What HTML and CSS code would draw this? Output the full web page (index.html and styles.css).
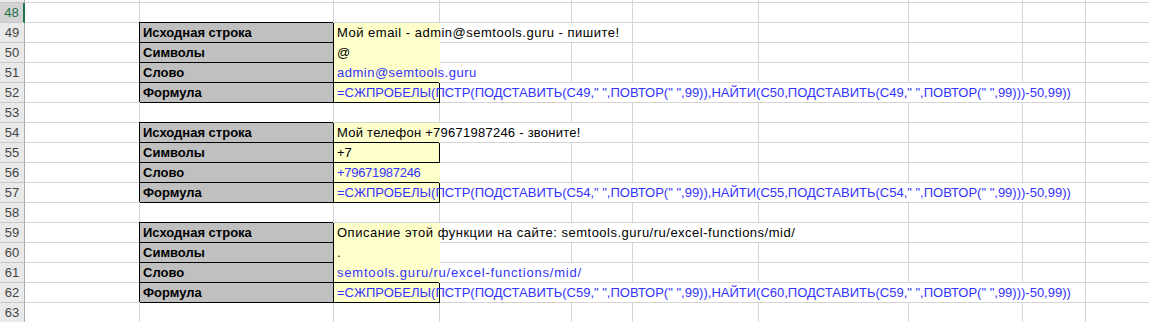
FILE: index.html
```html
<!DOCTYPE html>
<html lang="ru">
<head>
    <meta charset="UTF-8" />
    <title>ПСТР - извлечение слова по символу</title>
    <link rel="stylesheet" href="styles.css">
</head>
<body>
<div class="sheet">
    <!-- row 47 is scrolled almost out of view -->
    <div class="cut">
        <div class="row">
            <div class="rh"></div>
            <div class="cell"></div><div class="cell"></div><div class="cell"></div><div class="cell"></div><div class="cell"></div>
            <div class="cell"></div><div class="cell"></div><div class="cell"></div><div class="cell"></div><div class="cell last"></div>
        </div>
    </div>

    <div class="row">
        <div class="rh sel">48</div>
        <div class="cell"></div><div class="cell"></div><div class="cell"></div><div class="cell"></div><div class="cell"></div>
        <div class="cell"></div><div class="cell"></div><div class="cell"></div><div class="cell"></div><div class="cell last"></div>
    </div>

    <!-- example 1: email -->
    <div class="row">
        <div class="rh">49</div>
        <div class="cell"></div>
        <div class="cell lbl">Исходная строка</div>
        <div class="cell fill ls-m">Мой email - admin@semtools.guru - пишите!</div>
        <div class="cell span2"></div>
        <div class="cell"></div><div class="cell"></div><div class="cell"></div><div class="cell"></div><div class="cell last"></div>
    </div>
    <div class="row">
        <div class="rh">50</div>
        <div class="cell"></div>
        <div class="cell lbl">Символы</div>
        <div class="cell fill">@</div>
        <div class="cell"></div><div class="cell"></div><div class="cell"></div><div class="cell"></div>
        <div class="cell"></div><div class="cell"></div><div class="cell last"></div>
    </div>
    <div class="row">
        <div class="rh">51</div>
        <div class="cell"></div>
        <div class="cell lbl">Слово</div>
        <div class="cell fill blue ls-m">admin@semtools.guru</div>
        <div class="cell"></div><div class="cell"></div><div class="cell"></div><div class="cell"></div>
        <div class="cell"></div><div class="cell"></div><div class="cell last"></div>
    </div>
    <div class="row">
        <div class="rh">52</div>
        <div class="cell"></div>
        <div class="cell lbl">Формула</div>
        <div class="cell fill box blue">=СЖПРОБЕЛЫ(ПСТР(ПОДСТАВИТЬ(C49," ",ПОВТОР(" ",99)),НАЙТИ(C50,ПОДСТАВИТЬ(C49," ",ПОВТОР(" ",99)))-50,99))</div>
        <div class="cell span6"></div>
        <div class="cell last"></div>
    </div>

    <div class="row">
        <div class="rh">53</div>
        <div class="cell"></div><div class="cell"></div><div class="cell"></div><div class="cell"></div><div class="cell"></div>
        <div class="cell"></div><div class="cell"></div><div class="cell"></div><div class="cell"></div><div class="cell last"></div>
    </div>

    <!-- example 2: phone -->
    <div class="row">
        <div class="rh">54</div>
        <div class="cell"></div>
        <div class="cell lbl">Исходная строка</div>
        <div class="cell fill ls-s">Мой телефон +79671987246 - звоните!</div>
        <div class="cell span2"></div>
        <div class="cell"></div><div class="cell"></div><div class="cell"></div><div class="cell"></div><div class="cell last"></div>
    </div>
    <div class="row">
        <div class="rh">55</div>
        <div class="cell"></div>
        <div class="cell lbl">Символы</div>
        <div class="cell fill box">+7</div>
        <div class="cell"></div><div class="cell"></div><div class="cell"></div><div class="cell"></div>
        <div class="cell"></div><div class="cell"></div><div class="cell last"></div>
    </div>
    <div class="row">
        <div class="rh">56</div>
        <div class="cell"></div>
        <div class="cell lbl">Слово</div>
        <div class="cell fill blue ls-n">+79671987246</div>
        <div class="cell"></div><div class="cell"></div><div class="cell"></div><div class="cell"></div>
        <div class="cell"></div><div class="cell"></div><div class="cell last"></div>
    </div>
    <div class="row">
        <div class="rh">57</div>
        <div class="cell"></div>
        <div class="cell lbl">Формула</div>
        <div class="cell fill box blue">=СЖПРОБЕЛЫ(ПСТР(ПОДСТАВИТЬ(C54," ",ПОВТОР(" ",99)),НАЙТИ(C55,ПОДСТАВИТЬ(C54," ",ПОВТОР(" ",99)))-50,99))</div>
        <div class="cell span6"></div>
        <div class="cell last"></div>
    </div>

    <div class="row">
        <div class="rh">58</div>
        <div class="cell"></div><div class="cell"></div><div class="cell"></div><div class="cell"></div><div class="cell"></div>
        <div class="cell"></div><div class="cell"></div><div class="cell"></div><div class="cell"></div><div class="cell last"></div>
    </div>

    <!-- example 3: url -->
    <div class="row">
        <div class="rh">59</div>
        <div class="cell"></div>
        <div class="cell lbl">Исходная строка</div>
        <div class="cell fill ls-m">Описание этой функции на сайте: semtools.guru/ru/excel-functions/mid/</div>
        <div class="cell span4"></div>
        <div class="cell"></div><div class="cell"></div><div class="cell last"></div>
    </div>
    <div class="row">
        <div class="rh">60</div>
        <div class="cell"></div>
        <div class="cell lbl">Символы</div>
        <div class="cell fill">.</div>
        <div class="cell"></div><div class="cell"></div><div class="cell"></div><div class="cell"></div>
        <div class="cell"></div><div class="cell"></div><div class="cell last"></div>
    </div>
    <div class="row">
        <div class="rh">61</div>
        <div class="cell"></div>
        <div class="cell lbl">Слово</div>
        <div class="cell fill blue ls-l">semtools.guru/ru/excel-functions/mid/</div>
        <div class="cell span2"></div>
        <div class="cell"></div><div class="cell"></div><div class="cell"></div><div class="cell"></div><div class="cell last"></div>
    </div>
    <div class="row">
        <div class="rh">62</div>
        <div class="cell"></div>
        <div class="cell lbl">Формула</div>
        <div class="cell fill box blue">=СЖПРОБЕЛЫ(ПСТР(ПОДСТАВИТЬ(C59," ",ПОВТОР(" ",99)),НАЙТИ(C60,ПОДСТАВИТЬ(C59," ",ПОВТОР(" ",99)))-50,99))</div>
        <div class="cell span6"></div>
        <div class="cell last"></div>
    </div>

    <div class="row">
        <div class="rh">63</div>
        <div class="cell"></div><div class="cell"></div><div class="cell"></div><div class="cell"></div><div class="cell"></div>
        <div class="cell"></div><div class="cell"></div><div class="cell"></div><div class="cell"></div><div class="cell last"></div>
    </div>
</div>
</body>
</html>
```

FILE: styles.css
```css
:root {
    --grid: #d4d4d4;
    --head-bg: #e9e9e9;
    --head-line: #c8c8c8;
    --head-edge: #ababab;
    --head-text: #444;
    --selected: #217346;
    --label-bg: #c0c0c0;
    --fill: #ffffcc;
    --blue: #3333ff;
}

* {
    box-sizing: border-box;
}

body {
    margin: 0;
    background: #fff;
    color: #000;
    font-family: 'Liberation Sans', Arial, sans-serif;
    font-size: 13px;
    overflow: hidden;
}

.sheet {
    display: flex;
    flex-direction: column;
}

/* partially visible first row */
.cut {
    height: 3px;
    overflow: hidden;
    display: flex;
    flex-direction: column;
    justify-content: flex-end;
}

.row {
    display: grid;
    grid-template-columns: 25px 115px 194px 106px 132px 61px 126px 150px 114px 63px 1fr;
    height: 20px;
    flex-shrink: 0;
}

.rh {
    background: var(--head-bg);
    border-right: 1px solid var(--head-edge);
    border-bottom: 1px solid var(--head-line);
    color: var(--head-text);
    text-align: center;
    line-height: 19px;
}

.rh.sel {
    background: #d2d2d2;
    border-right: 2px solid var(--selected);
    color: var(--selected);
}

.cell {
    border-right: 1px solid var(--grid);
    border-bottom: 1px solid var(--grid);
    padding: 0 3px;
    line-height: 19px;
    white-space: nowrap;
    min-width: 0;
}

.cell.last {
    border-right: none;
}

.span2 { grid-column: span 2; }
.span4 { grid-column: span 4; }
.span6 { grid-column: span 6; }

/* grey label column with black borders */
.lbl {
    background: var(--label-bg);
    font-weight: bold;
    border-color: #000;
    box-shadow: -1px -1px 0 #000;
}

/* yellow input cells hide the grid lines */
.fill {
    background: var(--fill);
    border-color: transparent;
}

.fill.box {
    border-color: #000;
    box-shadow: -1px -1px 0 #000;
}

.blue {
    color: var(--blue);
}

.ls-n { letter-spacing: -0.3px; }
.ls-s { letter-spacing: 0.25px; }
.ls-m { letter-spacing: 0.5px; }
.ls-l { letter-spacing: 0.8px; }
```
